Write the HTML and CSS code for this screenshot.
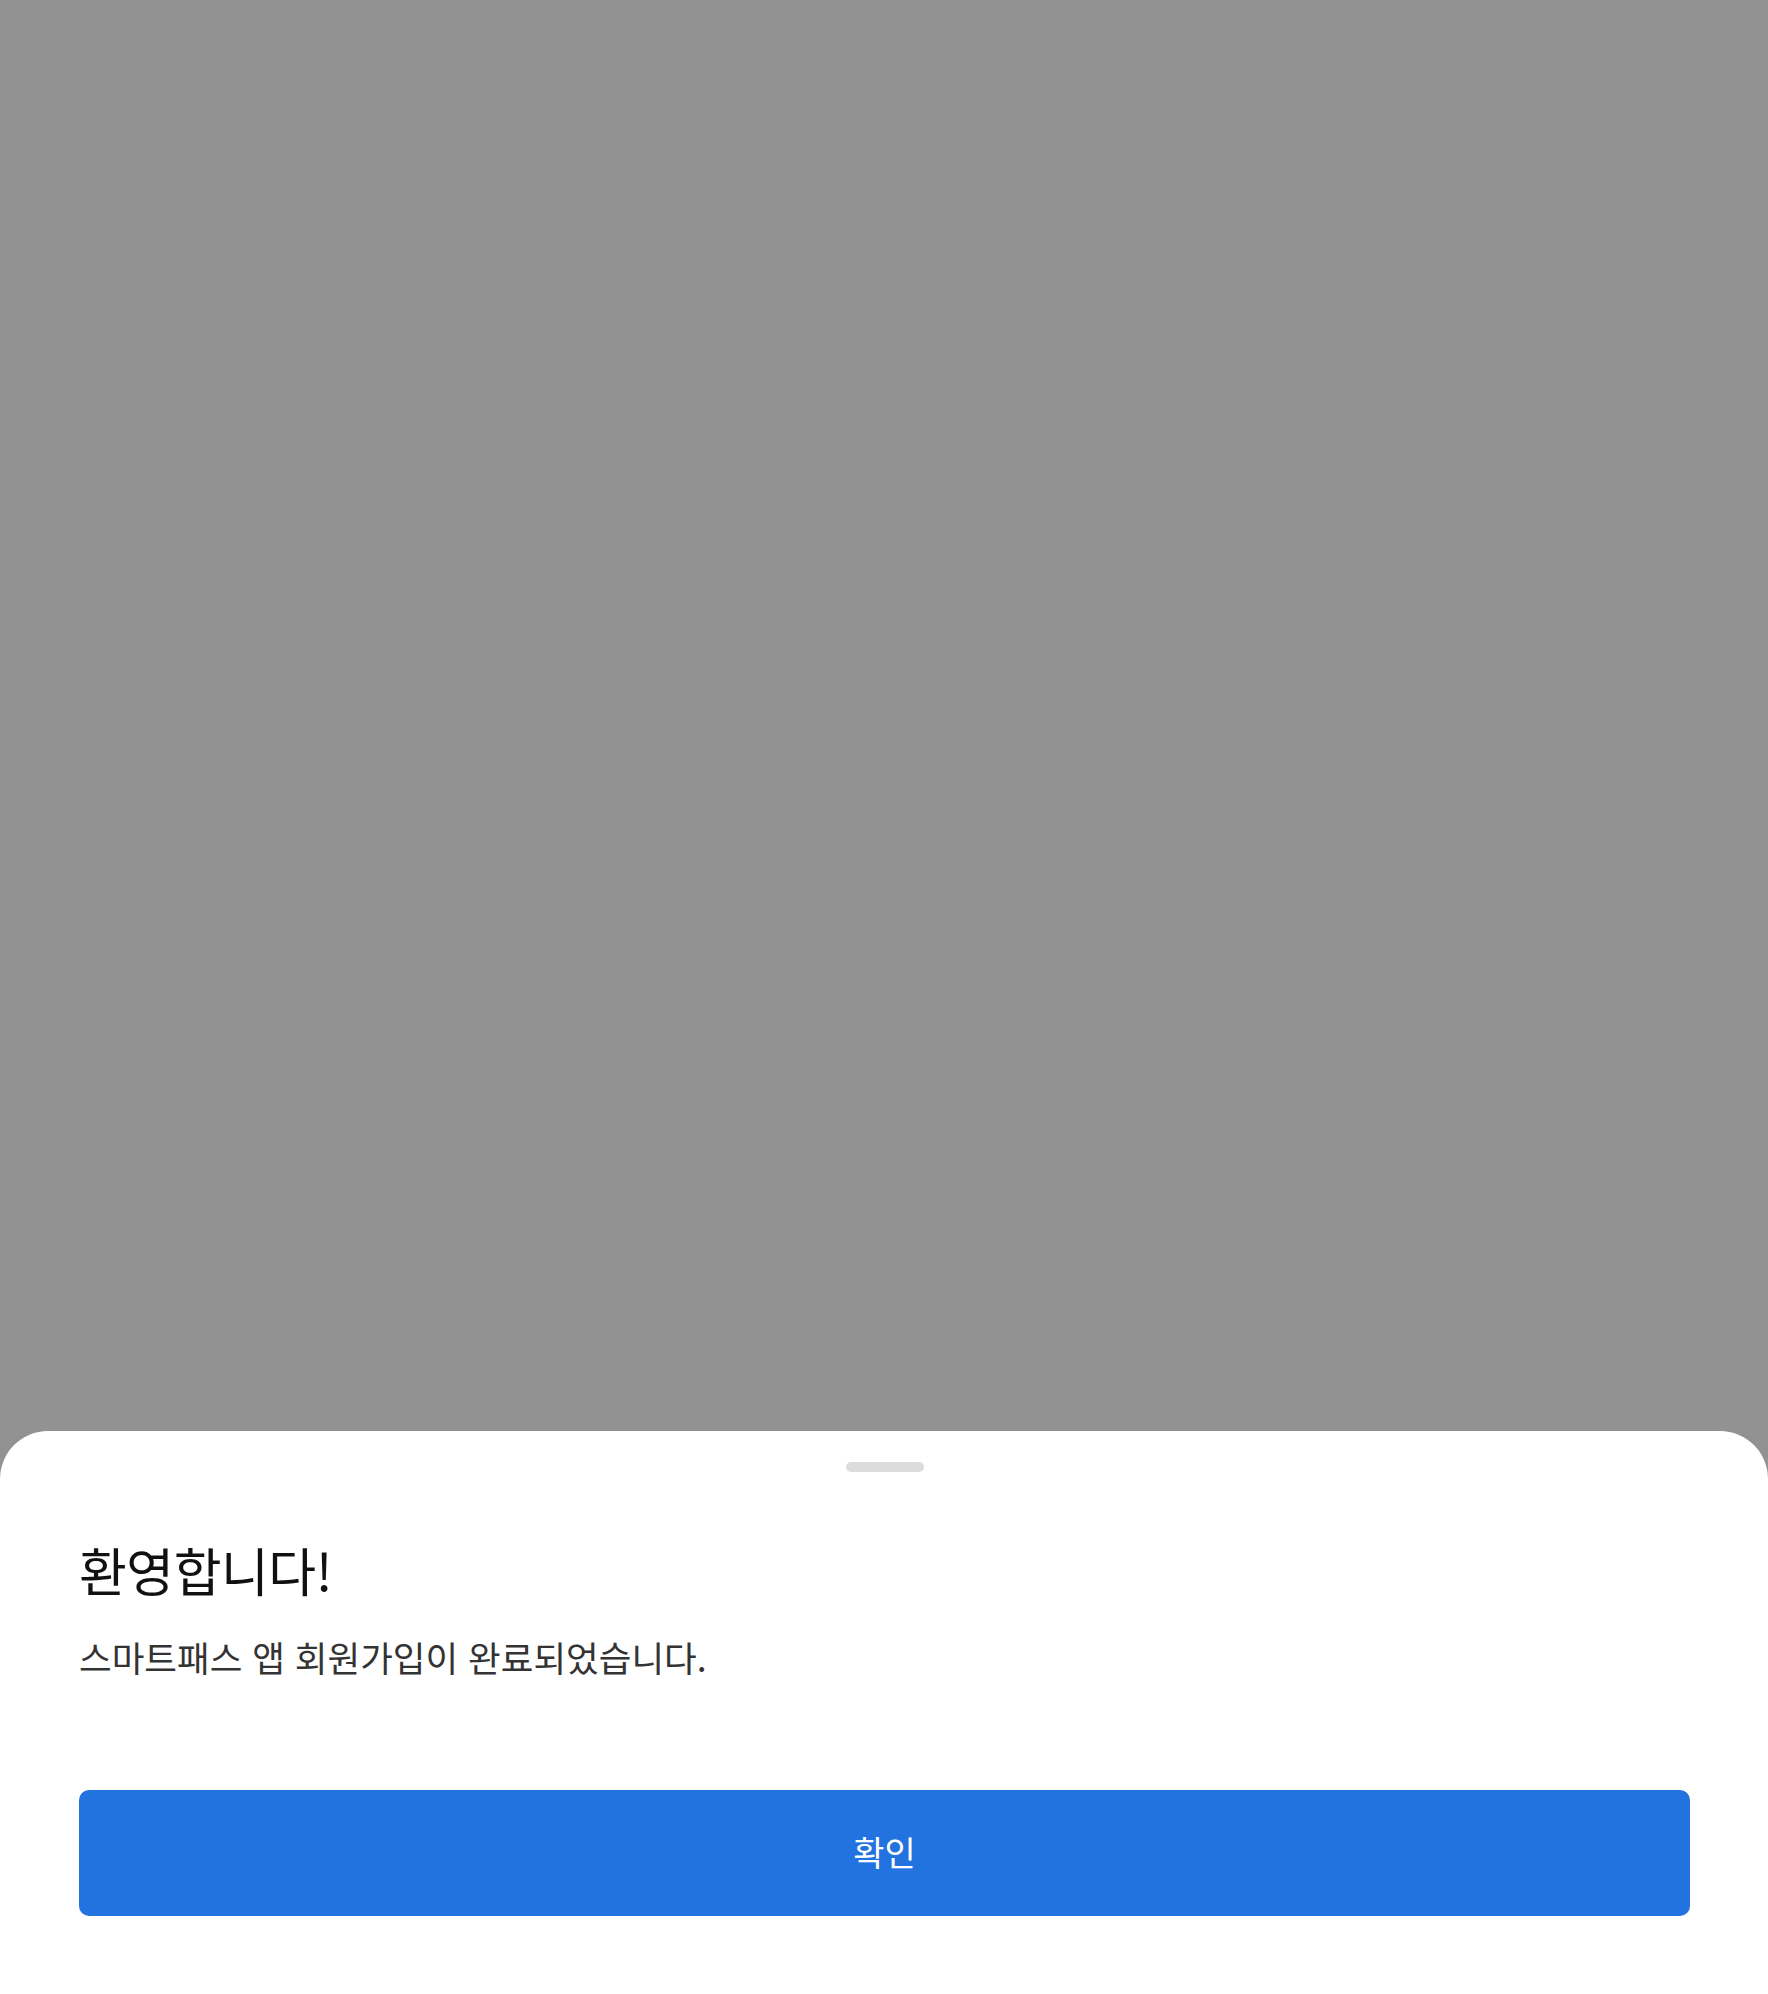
FILE: index.html
```html
<!DOCTYPE html>
<html lang="ko">
<head>
<meta charset="utf-8">
<title>환영합니다</title>
<link rel="stylesheet" href="styles.css">
</head>
<body>
<div class="screen">
  <div class="dim"></div>
  <div class="sheet">
    <div class="handle"></div>
    <h1 class="title">환영합니다!</h1>
    <p class="desc">스마트패스 앱 회원가입이 완료되었습니다.</p>
    <button class="confirm" type="button">확인</button>
  </div>
</div>
</body>
</html>
```

FILE: styles.css
```css
html, body {
  margin: 0;
  padding: 0;
}
body {
  width: 1768px;
  height: 1994px;
  background: #929292;
  font-family: "Noto Sans CJK KR", "Noto Sans", sans-serif;
  overflow: hidden;
}
.screen {
  display: flex;
  flex-direction: column;
  height: 1994px;
}
.dim {
  flex: 1;
  background: #929292;
}
.sheet {
  background: #ffffff;
  border-radius: 48px 48px 0 0;
  padding: 31px 78px 78px 79px;
  display: flex;
  flex-direction: column;
}
.handle {
  align-self: center;
  width: 78px;
  height: 10px;
  border-radius: 5px;
  background: #dcdcdc;
}
.title {
  margin: 68px 0 0;
  font-size: 52px;
  line-height: 60px;
  font-weight: 400;
  color: #111111;
  letter-spacing: -0.5px;
}
.desc {
  margin: 35px 0 0;
  font-size: 35.5px;
  line-height: 44px;
  font-weight: 400;
  color: #333333;
}
.confirm {
  margin-top: 111px;
  height: 126px;
  border: none;
  border-radius: 10px;
  background: #2273e0;
  color: #ffffff;
  font-family: inherit;
  font-size: 34px;
  font-weight: 400;
  padding: 0 0 4px;
}
```
